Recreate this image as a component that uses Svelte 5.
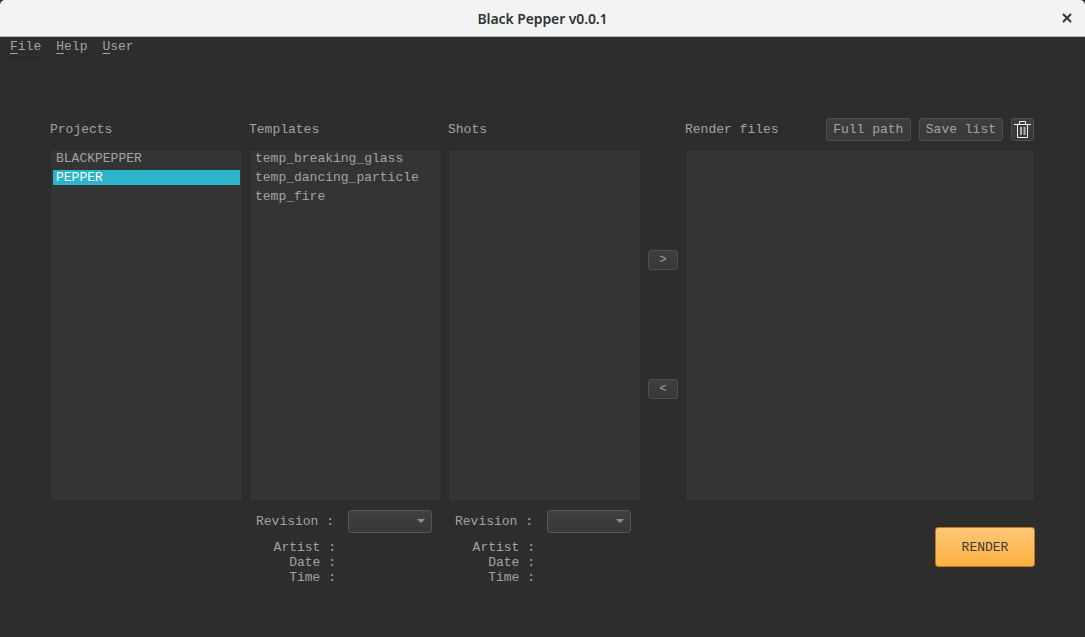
<script>
    const projects = ['BLACKPEPPER', 'PEPPER'];
    const templates = ['temp_breaking_glass', 'temp_dancing_particle', 'temp_fire'];
    const shots = [];
    const menus = ['File', 'Help', 'User'];
    let selectedProject = 'PEPPER';
</script>

{#snippet revisionInfo()}
    <div class="revision">
        <span class="revision-label">Revision :</span>
        <div class="combo"><span class="arrow"></span></div>
    </div>
    <div class="info">
        <span>Artist :</span>
        <span>Date :</span>
        <span>Time :</span>
    </div>
{/snippet}

<div class="window">
    <header class="titlebar">
        <span class="title">Black Pepper v0.0.1</span>
        <svg class="close" width="10" height="10" viewBox="0 0 10 10">
            <path d="M1 1 L9 9 M9 1 L1 9" stroke="#2e3436" stroke-width="2" fill="none" />
        </svg>
    </header>

    <nav class="menubar">
        {#each menus as menu}
            <span class="menu"><u>{menu[0]}</u>{menu.slice(1)}</span>
        {/each}
    </nav>

    <main class="content">
        <section class="col">
            <div class="head">Projects</div>
            <ul class="list">
                {#each projects as project}
                    <li class:selected={project === selectedProject}>{project}</li>
                {/each}
            </ul>
        </section>

        <section class="col">
            <div class="head">Templates</div>
            <ul class="list">
                {#each templates as template}
                    <li>{template}</li>
                {/each}
            </ul>
            {@render revisionInfo()}
        </section>

        <section class="col">
            <div class="head">Shots</div>
            <ul class="list">
                {#each shots as shot}
                    <li>{shot}</li>
                {/each}
            </ul>
            {@render revisionInfo()}
        </section>

        <div class="transfer">
            <button class="btn small">&gt;</button>
            <button class="btn small">&lt;</button>
        </div>

        <section class="col render-col">
            <div class="head">
                <span class="head-label">Render files</span>
                <button class="btn full">Full path</button>
                <button class="btn">Save list</button>
                <button class="btn trash" aria-label="Clear list">
                    <svg width="17" height="17" viewBox="0 0 17 17" fill="none" stroke="#f2f2f2" stroke-width="1">
                        <path d="M0 3.5 H17" />
                        <path d="M5.5 3.5 V0.5 H11.5 V3.5" />
                        <path d="M3.5 3.5 V16.5 H13.5 V3.5" />
                        <path d="M7 6 V14 M10.5 6 V14" stroke="#b4b4b4" stroke-width="2" />
                    </svg>
                </button>
            </div>
            <ul class="list"></ul>
            <div class="render-row">
                <button class="render">RENDER</button>
            </div>
        </section>
    </main>
</div>

<style>
    :global(body) {
        margin: 0;
        background: #fff;
    }
    .window {
        width: 1085px;
        height: 637px;
        display: flex;
        flex-direction: column;
        background: #2d2d2d;
        color: #a3a3a3;
        font-family: "Liberation Mono", monospace;
        font-size: 13px;
        overflow: hidden;
    }
    .titlebar {
        height: 36px;
        flex: none;
        display: flex;
        align-items: center;
        justify-content: center;
        position: relative;
        background: #f3f3f3;
        border-bottom: 1px solid #b6b6b0;
        border-radius: 5px 5px 0 0;
    }
    .title {
        font-family: "Noto Sans", sans-serif;
        font-weight: 600;
        font-size: 14px;
        letter-spacing: -0.1px;
        color: #2e3436;
    }
    .close {
        position: absolute;
        right: 13px;
        top: 13px;
    }
    .menubar {
        height: 18px;
        flex: none;
        display: flex;
        gap: 15px;
        padding-left: 10px;
        align-items: center;
        position: relative;
    }
    /* faint edge left under the first menu */
    .menubar::after {
        content: "";
        position: absolute;
        left: 6px;
        top: 19px;
        width: 39px;
        height: 1px;
        background: #272727;
    }
    .menu u {
        text-underline-offset: 3px;
    }
    .content {
        display: flex;
        padding: 63px 50px 0;
    }
    .col {
        width: 193px;
        margin-right: 6px;
        display: flex;
        flex-direction: column;
    }
    .head {
        height: 23px;
        margin-bottom: 8px;
        display: flex;
        align-items: center;
        gap: 8px;
    }
    .head-label {
        flex: 1;
    }
    .list {
        list-style: none;
        margin: 0;
        padding: 1px 2px;
        height: 353px;
        width: 100%;
        background: #343434;
        border: 1px solid #292929;
        box-sizing: border-box;
        overflow: hidden;
    }
    .list li {
        height: 15px;
        line-height: 15px;
        margin-bottom: 4px;
        padding-left: 3px;
        white-space: nowrap;
    }
    .list li.selected {
        background: #2cb5ca;
        color: #fff;
    }
    .revision {
        display: flex;
        align-items: center;
        margin-top: 8px;
        height: 23px;
    }
    .revision-label {
        width: 99px;
        padding: 0 0 1px 7px;
        box-sizing: border-box;
        flex: none;
    }
    .combo {
        width: 84px;
        height: 23px;
        box-sizing: border-box;
        border: 1px solid #565656;
        border-radius: 3px;
        background: linear-gradient(#404040, #373737);
        position: relative;
    }
    .arrow {
        position: absolute;
        right: 6px;
        top: 8px;
        border-left: 4px solid transparent;
        border-right: 4px solid transparent;
        border-top: 4px solid #8f8f8f;
    }
    .info {
        display: flex;
        flex-direction: column;
        align-items: flex-end;
        width: 87px;
        margin-top: 7px;
        line-height: 15px;
    }
    .transfer {
        width: 44px;
        margin-left: -6px;
        flex: none;
        display: flex;
        flex-direction: column;
        align-items: center;
        gap: 109px;
        padding-top: 132px;
        box-sizing: border-box;
    }
    .btn {
        height: 23px;
        padding: 0 6px;
        font: inherit;
        color: #a3a3a3;
        background: linear-gradient(#3e3e3e, #383838);
        border: 1px solid #4f4f4f;
        border-radius: 3px;
    }
    .btn.full {
        width: 85px;
    }
    .btn.small {
        width: 30px;
        height: 20px;
        padding: 0;
        font-size: 12px;
    }
    .btn.trash {
        width: 23px;
        padding: 0;
        margin-right: 1px;
        display: flex;
        align-items: center;
        justify-content: center;
    }
    .render-col {
        width: 350px;
        margin-right: 0;
    }
    .render-row {
        display: flex;
        justify-content: flex-end;
        margin-top: 25px;
    }
    .render {
        width: 100px;
        height: 40px;
        font: inherit;
        color: #3a3a3a;
        background: linear-gradient(#fdc778, #fdb13f);
        border: 1px solid #b8791f;
        border-radius: 3px;
    }
</style>
